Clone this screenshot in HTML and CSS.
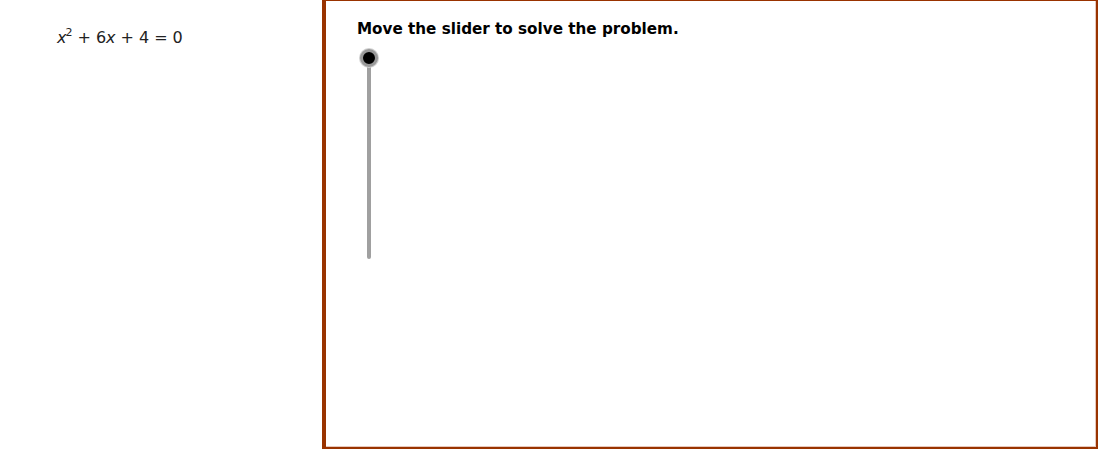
FILE: index.html
```html
<!DOCTYPE html>
<html>
<head>
<meta charset="utf-8">
<link rel="stylesheet" href="styles.css">
</head>
<body>
<div class="page">
  <div class="algebra">
    <div class="eq"><span class="var">x</span><sup>2</sup><span class="op">+</span>6<span class="var">x</span><span class="op">+</span>4<span class="op">=</span>0</div>
  </div>
  <div class="graphics">
    <div class="title">Move the slider to solve the problem.</div>
    <div class="slider">
      <div class="track"></div>
      <div class="knob"></div>
    </div>
  </div>
</div>
</body>
</html>
```
FILE: styles.css
```css
html, body {
  margin: 0;
  padding: 0;
  background: #ffffff;
}
.page {
  display: flex;
  width: 1100px;
  height: 450px;
}
.algebra {
  width: 322px;
  flex: none;
}
.eq {
  font-family: "DejaVu Sans", sans-serif;
  font-size: 16px;
  color: #222;
  margin: 28px 0 0 57px;
  line-height: 20px;
}
.eq .var {
  font-style: italic;
}
.eq sup {
  font-size: 11px;
  vertical-align: 7px;
  line-height: 0;
  margin-left: -1px;
}
.eq .op {
  margin: 0 5px;
}
.graphics {
  width: 770px;
  height: 446px;
  border-left: 4px solid #993300;
  border-top: 1px solid #993300;
  border-right: 2px solid #993300;
  border-bottom: 2px solid #993300;
  box-shadow: inset -1px -1px 0 #e8c8bc;
  position: relative;
}
.title {
  font-family: "DejaVu Sans", sans-serif;
  font-weight: bold;
  font-size: 15.2px;
  color: #000;
  margin: 19px 0 0 31px;
  line-height: 18px;
}
.slider {
  position: absolute;
  left: 33px;
  top: 47px;
  width: 20px;
  height: 214px;
}
.track {
  position: absolute;
  left: 8px;
  top: 9px;
  width: 4px;
  height: 202px;
  border-radius: 2px;
  background: #a0a0a0;
}
.knob {
  position: absolute;
  left: 1px;
  top: 1px;
  width: 12px;
  height: 12px;
  border-radius: 50%;
  background: #000;
  border: 3px solid #999999;
  box-shadow: 0 0 0 1px #d0d0d0;
}
```
